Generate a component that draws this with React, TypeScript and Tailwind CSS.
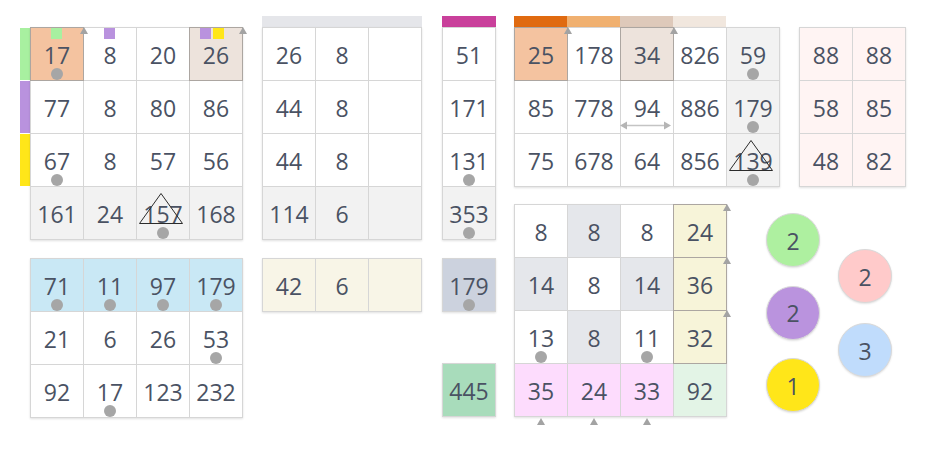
import React from "react";

type C = {
  v?: string | number;
  bg?: string;
  dot?: boolean;
  tri?: boolean;
  hl?: boolean;
  arrow?: boolean;
  squares?: string[];
  harrow?: boolean;
  below?: boolean;
};

const OR = "bg-[#f4c3a0]";
const TAN = "bg-[#ede3dc]";
const GR = "bg-[#f2f2f2]";
const BL = "bg-[#c9e8f5]";
const CR = "bg-[#f8f5e7]";
const YC = "bg-[#f7f4d9]";
const GY = "bg-[#e5e7eb]";
const PK = "bg-[#fddcfd]";
const GN = "bg-[#e3f4e6]";
const PG = "bg-[#fff4f3]";

const SQ_GREEN = "bg-[#a8f0a0]";
const SQ_PURPLE = "bg-[#b992de]";
const SQ_YELLOW = "bg-[#ffe619]";

function UpArrow() {
  return (
    <svg width="8" height="7" viewBox="0 0 8 7">
      <polygon points="4,0 8,7 0,7" fill="#a3a3a3" />
    </svg>
  );
}

function Cell({ c }: { c: C }) {
  return (
    <div
      className={`relative flex items-center justify-center w-[52px] h-[52px] text-[23px] leading-none ${c.bg ?? "bg-white"} ${
        c.hl ? "z-10 outline outline-1 outline-[#aca6a1]" : ""
      }`}
    >
      <span className="relative top-[1px]">{c.v}</span>
      {c.squares && (
        <div
          className={`absolute top-0 flex gap-[2px] ${
            c.squares.length > 1 ? "left-[10px]" : "left-[20px]"
          }`}
        >
          {c.squares.map((s, i) => (
            <div key={i} className={`w-[11px] h-[11px] ${s}`} />
          ))}
        </div>
      )}
      {c.dot && (
        <div className="absolute bottom-0 left-1/2 -translate-x-1/2 w-[12px] h-[12px] rounded-full bg-[#a6a6a6]" />
      )}
      {c.tri && (
        <svg
          className="absolute top-[6px] left-[2px]"
          width="44"
          height="31"
          viewBox="0 0 44 31"
        >
          <polygon
            points="22,0.5 0.5,30.5 43.5,30.5"
            fill="none"
            stroke="#2b2b2b"
            strokeWidth="1"
          />
        </svg>
      )}
      {c.harrow && (
        <svg
          className="absolute top-[40px] left-[-1px]"
          width="51"
          height="9"
          viewBox="0 0 51 9"
        >
          <line x1="5" y1="4.5" x2="46" y2="4.5" stroke="#c4c4c4" strokeWidth="1.5" />
          <polygon points="0,4.5 7,0.5 7,8.5" fill="#b5b5b5" />
          <polygon points="51,4.5 44,0.5 44,8.5" fill="#b5b5b5" />
        </svg>
      )}
      {c.arrow && (
        <div className="absolute top-[-1px] right-[-5px] z-20 flex">
          <UpArrow />
        </div>
      )}
      {c.below && (
        <div className="absolute top-[54px] left-1/2 -translate-x-1/2 flex">
          <UpArrow />
        </div>
      )}
    </div>
  );
}

function Grid({ rows, cols }: { rows: C[][]; cols: string }) {
  return (
    <div
      className={`grid ${cols} gap-px p-px bg-[#d6d6d6] shadow-[0_1px_2px_rgba(0,0,0,0.12)]`}
    >
      {rows.flat().map((c, i) => (
        <Cell key={i} c={c} />
      ))}
    </div>
  );
}

const aTop: C[][] = [
  [
    { v: 17, bg: OR, hl: true, arrow: true, dot: true, squares: [SQ_GREEN] },
    { v: 8, squares: [SQ_PURPLE] },
    { v: 20 },
    { v: 26, bg: TAN, hl: true, arrow: true, squares: [SQ_PURPLE, SQ_YELLOW] },
  ],
  [{ v: 77 }, { v: 8 }, { v: 80 }, { v: 86 }],
  [{ v: 67, dot: true }, { v: 8 }, { v: 57 }, { v: 56 }],
  [
    { v: 161, bg: GR },
    { v: 24, bg: GR },
    { v: 157, bg: GR, tri: true, dot: true },
    { v: 168, bg: GR },
  ],
];

const aBot: C[][] = [
  [
    { v: 71, bg: BL, dot: true },
    { v: 11, bg: BL, dot: true },
    { v: 97, bg: BL, dot: true },
    { v: 179, bg: BL, dot: true },
  ],
  [{ v: 21 }, { v: 6 }, { v: 26 }, { v: 53, dot: true }],
  [{ v: 92 }, { v: 17, dot: true }, { v: 123 }, { v: 232 }],
];

const bTop: C[][] = [
  [{ v: 26 }, { v: 8 }, {}],
  [{ v: 44 }, { v: 8 }, {}],
  [{ v: 44 }, { v: 8 }, {}],
  [{ v: 114, bg: GR }, { v: 6, bg: GR }, { bg: GR }],
];

const bBot: C[][] = [[{ v: 42, bg: CR }, { v: 6, bg: CR }, { bg: CR }]];

const cCol: C[][] = [
  [{ v: 51 }],
  [{ v: 171 }],
  [{ v: 131, dot: true }],
  [{ v: 353, bg: GR, dot: true }],
];

const dTop: C[][] = [
  [
    { v: 25, bg: OR, hl: true, arrow: true },
    { v: 178 },
    { v: 34, bg: TAN, hl: true, arrow: true },
    { v: 826 },
    { v: 59, bg: GR, dot: true },
  ],
  [
    { v: 85 },
    { v: 778 },
    { v: 94, harrow: true },
    { v: 886 },
    { v: 179, bg: GR, dot: true },
  ],
  [
    { v: 75 },
    { v: 678 },
    { v: 64 },
    { v: 856 },
    { v: 139, bg: GR, tri: true, dot: true },
  ],
];

const dBot: C[][] = [
  [{ v: 8 }, { v: 8, bg: GY }, { v: 8 }, { v: 24, bg: YC, hl: true, arrow: true }],
  [{ v: 14, bg: GY }, { v: 8 }, { v: 14, bg: GY }, { v: 36, bg: YC, hl: true, arrow: true }],
  [
    { v: 13, dot: true },
    { v: 8, bg: GY },
    { v: 11, dot: true },
    { v: 32, bg: YC, hl: true, arrow: true },
  ],
  [
    { v: 35, bg: PK, below: true },
    { v: 24, bg: PK, below: true },
    { v: 33, bg: PK, below: true },
    { v: 92, bg: GN },
  ],
];

const pinkGrid: C[][] = [
  [{ v: 88, bg: PG }, { v: 88, bg: PG }],
  [{ v: 58, bg: PG }, { v: 85, bg: PG }],
  [{ v: 48, bg: PG }, { v: 82, bg: PG }],
];

function Circle({ v, bg }: { v: number; bg: string }) {
  return (
    <div
      className={`flex items-center justify-center w-[54px] h-[54px] rounded-full border border-[#d9d9d9] shadow-[0_1px_2px_rgba(0,0,0,0.12)] text-[23px] leading-none ${bg}`}
    >
      <span className="relative top-[1px]">{v}</span>
    </div>
  );
}

export default function App() {
  return (
    <div className="w-[925px] min-h-[450px] bg-white pt-[16px] pl-[20px] flex items-start font-['Open_Sans',sans-serif] text-[#4a5263]">
      {/* Column A */}
      <div className="flex flex-col mt-[11px]">
        <div className="flex items-start">
          <div className="flex flex-col gap-px pt-px w-[10px]">
            <div className="h-[52px] bg-[#a8f0a0]" />
            <div className="h-[52px] bg-[#b992de]" />
            <div className="h-[52px] bg-[#ffe619]" />
          </div>
          <Grid rows={aTop} cols="grid-cols-[repeat(4,52px)]" />
        </div>
        <div className="mt-[18px] ml-[10px]">
          <Grid rows={aBot} cols="grid-cols-[repeat(4,52px)]" />
        </div>
      </div>

      {/* Column B */}
      <div className="flex flex-col ml-[19px]">
        <div className="h-[11px] bg-[#e5e6ea]" />
        <Grid rows={bTop} cols="grid-cols-[repeat(3,52px)]" />
        <div className="mt-[18px]">
          <Grid rows={bBot} cols="grid-cols-[repeat(3,52px)]" />
        </div>
      </div>

      {/* Column C */}
      <div className="flex flex-col ml-[20px]">
        <div className="h-[11px] bg-[#c9409b]" />
        <Grid rows={cCol} cols="grid-cols-[52px]" />
        <div className="mt-[18px]">
          <Grid rows={[[{ v: 179, bg: "bg-[#ccd2de]", dot: true }]]} cols="grid-cols-[52px]" />
        </div>
        <div className="mt-[51px]">
          <Grid rows={[[{ v: 445, bg: "bg-[#a8dcbb]" }]]} cols="grid-cols-[52px]" />
        </div>
      </div>

      {/* Column D + E */}
      <div className="flex flex-col ml-[18px]">
        <div className="flex items-start">
          <div className="flex flex-col">
            <div className="flex h-[11px]">
              <div className="w-[53px] bg-[#e06a10]" />
              <div className="w-[53px] bg-[#f0b070]" />
              <div className="w-[53px] bg-[#dec9ba]" />
              <div className="w-[53px] bg-[#f1e7de]" />
            </div>
            <Grid rows={dTop} cols="grid-cols-[repeat(5,52px)]" />
          </div>
          <div className="ml-[19px] mt-[11px]">
            <Grid rows={pinkGrid} cols="grid-cols-[repeat(2,52px)]" />
          </div>
        </div>
        <div className="flex items-start mt-[17px]">
          <Grid rows={dBot} cols="grid-cols-[repeat(4,52px)]" />
          <div className="flex flex-col gap-[18.5px] ml-[39px] mt-[9px]">
            <Circle v={2} bg="bg-[#aef0a0]" />
            <Circle v={2} bg="bg-[#ba93de]" />
            <Circle v={1} bg="bg-[#ffe619]" />
          </div>
          <div className="flex flex-col gap-[20px] ml-[18px] mt-[45px]">
            <Circle v={2} bg="bg-[#ffcaca]" />
            <Circle v={3} bg="bg-[#c0dcfc]" />
          </div>
        </div>
      </div>
    </div>
  );
}
